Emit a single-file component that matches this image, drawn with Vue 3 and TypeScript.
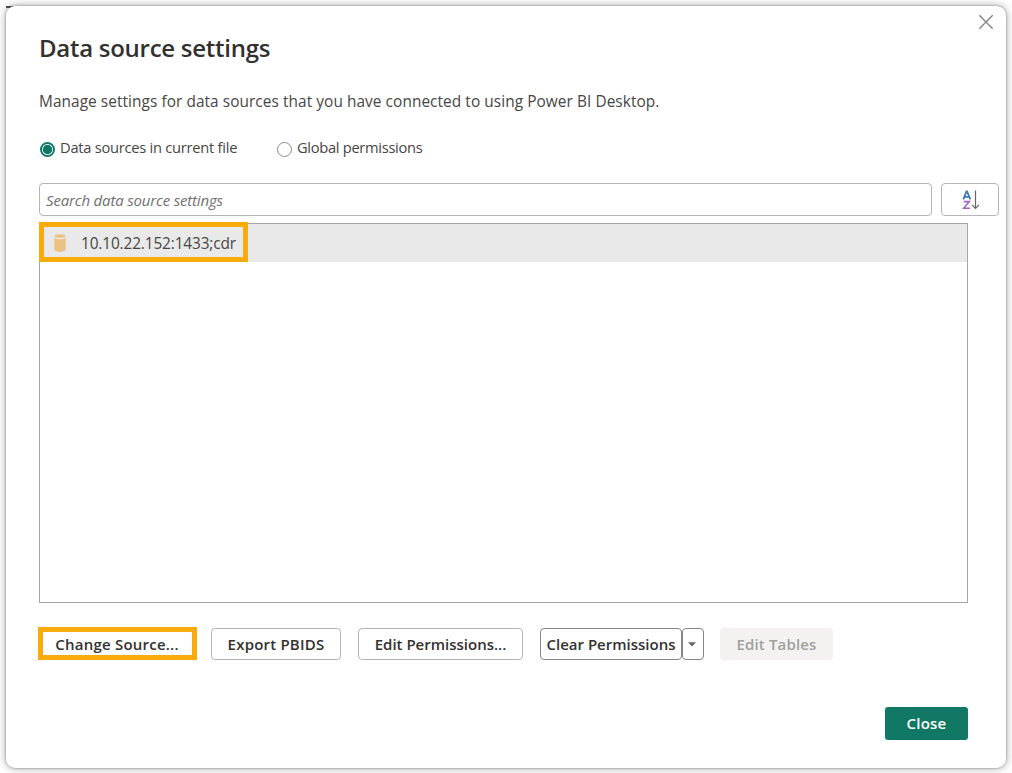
<script setup lang="ts">
import { ref } from 'vue'

type Scope = 'file' | 'global'
const scope = ref<Scope>('file')
const search = ref('')
const sources = ['10.10.22.152:1433;cdr']
</script>

<template>
  <div class="page">
  <main class="dialog">
    <button class="dismiss" aria-label="Dismiss">
      <svg width="16" height="16" viewBox="0 0 16 16"><path d="M1.3 1.3 14.7 14.7M14.7 1.3 1.3 14.7" /></svg>
    </button>
    <h1>Data source settings</h1>
    <p class="intro">Manage settings for data sources that you have connected to using Power BI Desktop.</p>

    <div class="scopes">
      <label class="scope" @click="scope = 'file'">
        <i class="radio" :class="{ on: scope === 'file' }"></i><span class="scope-name">Data sources in current file</span>
      </label>
      <label class="scope" @click="scope = 'global'">
        <i class="radio" :class="{ on: scope === 'global' }"></i><span class="scope-name">Global permissions</span>
      </label>
    </div>

    <div class="tools">
      <div class="search"><span v-if="!search">Search data source settings</span></div>
      <button class="sort" aria-label="Sort">
        <svg width="18" height="20" viewBox="0 0 18 20">
          <path class="a" d="M1.3 9.3 4.5 1.3h.6l3.2 8M2.5 6.9h4.6" />
          <path class="z" d="M1.6 11.6h5.7L1.6 18.3h6.4" />
          <path class="arrow" d="M13.5 .6v17.6M10 14.8l3.5 3.5 3.5-3.5" />
        </svg>
      </button>
    </div>

    <div class="list">
      <div v-for="s in sources" :key="s" class="row">
        <div class="mark">
          <svg width="12" height="18" viewBox="0 0 12 18">
            <path d="M.3 3.9C2.8 5.6 9.2 5.6 11.7 3.9V15.2c0 3.3-11.4 3.3-11.4 0z" />
            <ellipse cx="6" cy="2" rx="5.5" ry="1.8" />
          </svg>
          <span>{{ s }}</span>
        </div>
      </div>
    </div>

    <div class="actions">
      <button class="btn change">Change Source...</button>
      <button class="btn export">Export PBIDS</button>
      <button class="btn edit">Edit Permissions...</button>
      <div class="split">
        <button class="btn clear">Clear Permissions</button>
        <button class="btn caret" aria-label="More"><svg width="8" height="5" viewBox="0 0 8 5"><path d="M0 .3h8L4 4.5z" /></svg></button>
      </div>
      <button class="btn tables" disabled>Edit Tables</button>
    </div>

    <div class="footer"><button class="close">Close</button></div>
  </main>
  </div>
</template>

<style>
body { background: #fff; }
</style>

<style scoped>
* { box-sizing: border-box; }
.page { position: relative; width: 1012px; height: 773px; padding: 6px; overflow: hidden; background: #fff; }
.page::before { content: ""; position: absolute; left: 6px; top: 6px; width: 7px; height: 2px; background: #555; }
.dialog {
  position: relative;
  width: 1000px;
  height: 762px;
  padding: 0 38px 0 33px;
  border-radius: 9px;
  background: #fff;
  box-shadow: 0 0 2px rgba(0, 0, 0, .4), 0 0 8px rgba(0, 0, 0, .38);
  font-family: "Open Sans", "Noto Sans", sans-serif;
  font-size: 15px;
  color: #484644;
  white-space: nowrap;
  display: flow-root;
}
button { font: inherit; padding: 0; margin: 0; border: 0; background: none; display: flex; align-items: center; justify-content: center; }
.dismiss { position: absolute; right: 12px; top: 8px; }
.dismiss path { fill: none; stroke: #858585; stroke-width: 1.4; }
h1 { margin: 26px 0 0; height: 32px; line-height: 32px; font-size: 24px; letter-spacing: -.27px; font-weight: 600; color: #323130; }
.intro { margin: 27px 0 0; height: 22px; line-height: 22px; font-size: 15.4px; letter-spacing: .068px; }
.scopes { display: flex; margin-top: 24px; height: 22px; }
.scope { display: flex; align-items: center; line-height: 22px; font-size: 14.7px; letter-spacing: -.26px; }
.scope + .scope { letter-spacing: -.31px; }
.scope:first-child { width: 237px; }
.scope-name { margin-bottom: 2px; }
.radio { width: 15px; height: 15px; margin: 3px 5px 0 1px; border: 1px solid #8a8a8a; border-radius: 50%; background: #fff; }
.radio.on { border: 2px solid #117865; background: radial-gradient(circle, #117865 4.3px, #fff 4.9px); }
.tools { display: flex; gap: 9px; width: 960px; margin-top: 24px; }
.search { width: 893px; height: 33px; padding-left: 6px; border: 1px solid #b5b5b5; border-radius: 4px; line-height: 33px; font-style: italic; letter-spacing: -.17px; color: #707070; }
.sort { width: 58px; height: 33px; padding-left: 1px; border: 1px solid #b5b5b5; border-radius: 4px; }
.sort path { fill: none; }
.sort .a { stroke: #3f78b5; stroke-width: 1.8; }
.sort .z { stroke: #a864cc; stroke-width: 1.6; }
.sort .arrow { stroke: #666; stroke-width: 1.2; }
.list { width: 929px; height: 380px; margin-top: 7px; border: 1px solid #a6a6a6; }
.row { display: flow-root; height: 38px; background: #e9e9e9; }
.mark { display: flex; align-items: center; width: 209px; height: 40px; margin: -2px 0 0 -1px; padding: 3px 0 0 10px; border: 5px solid #faab0c; font-size: 15.4px; letter-spacing: -.13px; }
.mark svg { margin: -2px 15px 0 0; fill: #eac282; }
.actions { display: flex; margin-top: 24px; margin-left: -1px; height: 33px; }
.btn { height: 32px; margin-top: 1px; border: 1px solid #b5b5b5; border-radius: 4px; font-weight: 600; color: #323130; }
.change { width: 159px; height: 33px; margin-top: 0; padding: 1px 1px 0 0; border: 5px solid #faab0c; border-radius: 0; letter-spacing: .22px; }
.export { width: 130px; margin-left: 14px; letter-spacing: .2px; }
.edit { width: 165px; margin-left: 17px; }
.split { display: flex; margin-left: 17px; }
.clear { width: 142px; border-color: #858585; }
.caret { width: 22px; padding-right: 2px; border-color: #858585; }
.caret svg { fill: #666; }
.tables { width: 113px; margin-left: 16px; border: 0; background: #f3f2f1; color: #a19f9d; letter-spacing: .15px; }
.footer { display: flex; justify-content: flex-end; margin-top: 47px; }
.close { width: 83px; height: 33px; padding-bottom: 1px; border-radius: 3px; background: #117865; color: #fff; font-weight: 600; letter-spacing: .2px; }
</style>
